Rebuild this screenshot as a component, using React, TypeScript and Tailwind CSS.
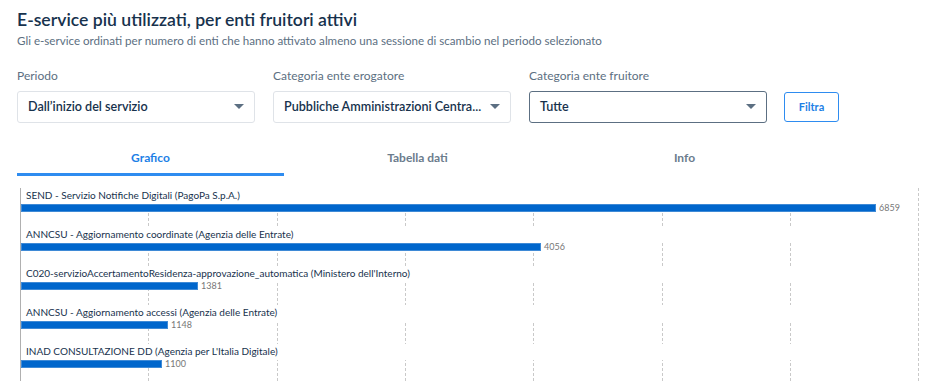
import React from "react";

const rows = [
  { label: "SEND - Servizio Notifiche Digitali (PagoPa S.p.A.)", value: 6859 },
  { label: "ANNCSU - Aggiornamento coordinate (Agenzia delle Entrate)", value: 4056 },
  { label: "C020-servizioAccertamentoResidenza-approvazione_automatica (Ministero dell'Interno)", value: 1381 },
  { label: "ANNCSU - Aggiornamento accessi (Agenzia delle Entrate)", value: 1148 },
  { label: "INAD CONSULTAZIONE DD (Agenzia per L'Italia Digitale)", value: 1100 },
];

function Caret() {
  return (
    <svg width="10" height="6" viewBox="0 0 10 6" className="shrink-0">
      <path d="M0 0 L10 0 L5 5 Z" fill="#5c6f82" />
    </svg>
  );
}

function Select({ label, value, dark }: { label: string; value: string; dark?: boolean }) {
  return (
    <div className="flex flex-col w-[238px]">
      <div className="text-[12px] leading-[16px] text-[#5c6f82] h-[16px] mb-[7px]">{label}</div>
      <div
        className={
          "h-[32px] flex items-center justify-between rounded-[3px] pl-[10px] pr-[10px] bg-white border " +
          (dark ? "border-[#5c6f82]" : "border-[#dfe3e8]")
        }
      >
        <span className="text-[12.6px] font-semibold text-[#17324d] whitespace-nowrap">{value}</span>
        <Caret />
      </div>
    </div>
  );
}

export default function App() {
  const grid = [0, 1, 2, 3, 4, 5, 6, 7];
  const k = 0.1283;
  return (
    <div className="w-[940px] h-[381px] overflow-hidden bg-white pl-[17px]" style={{ fontFamily: "Lato, 'Noto Sans', sans-serif" }}>
      <div className="pt-[8px]">
        <h1 className="text-[17.6px] leading-[24px] font-semibold text-[#17324d]">
          E-service più utilizzati, per enti fruitori attivi
        </h1>
        <p className="text-[11.6px] leading-[16px] text-[#5c6f82] mt-[1px]">
          Gli e-service ordinati per numero di enti che hanno attivato almeno una sessione di scambio nel periodo selezionato
        </p>
      </div>
      <div className="flex items-end gap-[18px] mt-[19px]">
        <Select label="Periodo" value="Dall’inizio del servizio" />
        <Select label="Categoria ente erogatore" value="Pubbliche Amministrazioni Centra..." />
        <Select label="Categoria ente fruitore" value="Tutte" dark />
        <button className="-ml-[1px] mb-[1px] h-[30px] w-[55px] rounded-[3px] border-[1.5px] border-[#2e8cf0] text-[#1d7fe6] text-[11px] font-bold bg-white">
          Filtra
        </button>
      </div>
      <div className="flex mt-[21px] w-[801px]">
        <div className="w-[267px] h-[32px] flex items-start justify-center pt-[5px] border-b-[3px] border-[#2e8cf0] text-[12px] font-bold text-[#1d7fe6]">
          Grafico
        </div>
        <div className="w-[267px] h-[32px] flex items-start justify-center pt-[5px] text-[12px] font-bold text-[#6b7c8d]">
          Tabella dati
        </div>
        <div className="w-[267px] h-[32px] flex items-start justify-center pt-[5px] text-[12px] font-bold text-[#6b7c8d]">
          Info
        </div>
      </div>
      <div className="relative mt-[12px] ml-[3px] h-[200px]">
        {grid.map((g) => (
          <div
            key={g}
            className="absolute top-0 h-[200px] w-px bg-[repeating-linear-gradient(to_bottom,#c9c9c9_0px,#c9c9c9_3px,transparent_3px,transparent_5px)]"
            style={{ left: Math.round(g * 1000 * k) }}
          />
        ))}
        <div className="relative z-10 flex flex-col">
          {rows.map((r) => (
            <div key={r.label} className="flex flex-col w-[880px] mb-[15px]">
              <div className="bg-white w-[878px] ml-[1px]">
                <div className="pl-[5px] text-[10px] leading-[14px] text-[#17324d] whitespace-nowrap">{r.label}</div>
                <div className="h-[2px]" />
              </div>
              <div className="flex items-center h-[8px] ml-[1px]">
                <div className="h-[8px] bg-[#0066cc] border border-[#3f8ad6]" style={{ width: Math.round(r.value * k) }} />
                <span className="ml-[3px] text-[9px] text-[#777] leading-[8px]">{r.value}</span>
              </div>
            </div>
          ))}
        </div>
        <div className="absolute top-0 h-[200px] left-0 w-px bg-[#b0b0b0] z-20" />
      </div>
    </div>
  );
}
